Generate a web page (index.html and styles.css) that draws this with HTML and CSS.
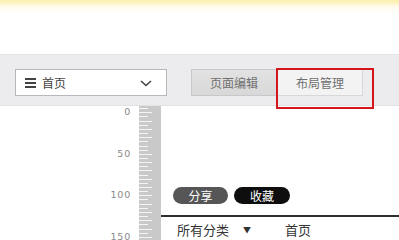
FILE: index.html
```html
<!DOCTYPE html>
<html>
<head>
<meta charset="utf-8">
<link rel="stylesheet" href="styles.css">
</head>
<body>
<div class="page">
  <div class="topband"></div>
  <div class="toolbar">
    <div class="select">
      <span class="burger"><i></i><i></i><i></i></span>
      <span class="select-text">首页</span>
      <svg class="chev" width="12" height="7" viewBox="0 0 12 7"><path d="M1 1 L6 5.5 L11 1" fill="none" stroke="#444" stroke-width="1.6"/></svg>
    </div>
    <div class="tabs">
      <div class="tab tab-active">页面编辑</div>
      <div class="tab tab-plain">布局管理</div>
      <div class="highlight"></div>
    </div>
  </div>
  <div class="main">
    <div class="labels">
      <div class="lbl">0</div>
      <div class="lbl">50</div>
      <div class="lbl">100</div>
      <div class="lbl">150</div>
    </div>
    <div class="ruler"></div>
    <div class="canvas">
      <div class="pills">
        <span class="pill pill-gray">分享</span>
        <span class="pill pill-black">收藏</span>
      </div>
      <div class="nav">
        <span class="nav-cat">所有分类<span class="tri">▼</span></span>
        <span class="nav-home">首页</span>
      </div>
    </div>
  </div>
</div>
</body>
</html>
```
FILE: styles.css
```css
html, body {
  margin: 0;
  padding: 0;
  background: #fff;
  overflow: hidden;
}
body {
  font-family: "Noto Sans CJK SC", "Noto Sans", sans-serif;
  width: 399px;
  height: 240px;
}
.page {
  display: flex;
  flex-direction: column;
  height: 240px;
  overflow: hidden;
}
.topband {
  flex-shrink: 0;
  height: 54px;
  background: linear-gradient(to bottom, #fcefaa 0px, #fdf3c4 3px, #fffcee 7px, #ffffff 14px);
}
.toolbar {
  flex-shrink: 0;
  background: #ececee;
  border-top: 1px solid #e4e4e6;
  border-bottom: 1px solid #e2e2e4;
  display: flex;
  align-items: flex-start;
  padding: 14px 0 0 15px;
  box-sizing: border-box;
  height: 52px;
}
.select {
  width: 152px;
  height: 27px;
  box-sizing: border-box;
  background: #fff;
  border: 1px solid #b8b8bc;
  display: flex;
  align-items: center;
  padding-left: 9px;
}
.burger {
  display: flex;
  flex-direction: column;
  gap: 2px;
  width: 11px;
  margin-right: 6px;
}
.burger i {
  display: block;
  height: 2px;
  background: #444;
}
.select-text {
  font-size: 12px;
  color: #444;
  line-height: 14px;
  flex: 1;
}
.chev {
  margin-right: 14px;
  margin-top: 1px;
}
.tabs {
  display: flex;
  margin-left: 24px;
  position: relative;
}
.tab {
  width: 86px;
  height: 27px;
  box-sizing: border-box;
  font-size: 12px;
  color: #707070;
  display: flex;
  align-items: center;
  justify-content: center;
  border: 1px solid #c8c8cc;
}
.tab-active {
  background: linear-gradient(#e2e2e2, #d8d8d8);
}
.tab-plain {
  background: #f3f3f4;
  border-color: #d8d8da;
}
.highlight {
  position: absolute;
  left: 85px;
  top: -1px;
  width: 98px;
  height: 41px;
  box-sizing: border-box;
  border: 2px solid #d6141c;
}
.main {
  flex: 1;
  min-height: 0;
  display: flex;
  overflow: hidden;
}
.labels {
  width: 131px;
  display: flex;
  flex-direction: column;
  align-items: flex-end;
  padding-top: 0;
}
.lbl {
  flex-shrink: 0;
  height: 41.5px;
  font-family: "DejaVu Sans", sans-serif;
  font-size: 9.5px;
  line-height: 12px;
  color: #8a8a8a;
  letter-spacing: 0.8px;
}
.ruler {
  width: 22px;
  margin-left: 8px;
  background-color: #c9c9c9;
  background-image:
    repeating-linear-gradient(to bottom, transparent 0, transparent 2.15px, #f4f4f4 2.15px, #f4f4f4 3.15px, transparent 3.15px, transparent 4.15px);
  background-size: 9px 100%;
  background-repeat: no-repeat;
  position: relative;
}
.ruler::after {
  content: "";
  position: absolute;
  left: 0;
  top: 0;
  width: 13px;
  height: 100%;
  background-image: repeating-linear-gradient(to bottom, transparent 0, transparent 6.3px, #f4f4f4 6.3px, #f4f4f4 7.3px, transparent 7.3px, transparent 8.3px);
}
.canvas {
  flex: 1;
  display: flex;
  flex-direction: column;
  padding-top: 81px;
}
.pills {
  display: flex;
  gap: 6px;
  padding-left: 12px;
  height: 17px;
  flex-shrink: 0;
}
.pill {
  width: 56px;
  height: 17px;
  border-radius: 9px;
  color: #fff;
  font-size: 12px;
  line-height: 17px;
  text-align: center;
}
.pill-gray {
  background: #565656;
  width: 55px;
}
.pill-black {
  background: #0e0e0e;
}
.nav {
  flex-shrink: 0;
  margin-top: 11px;
  border-top: 2px solid #2e2e2e;
  display: flex;
  padding-left: 16px;
  padding-top: 5px;
  font-size: 13px;
  color: #333;
  line-height: 16px;
}
.nav-cat {
  width: 108px;
}
.tri {
  font-size: 8px;
  margin-left: 14px;
  vertical-align: 2px;
}
```
